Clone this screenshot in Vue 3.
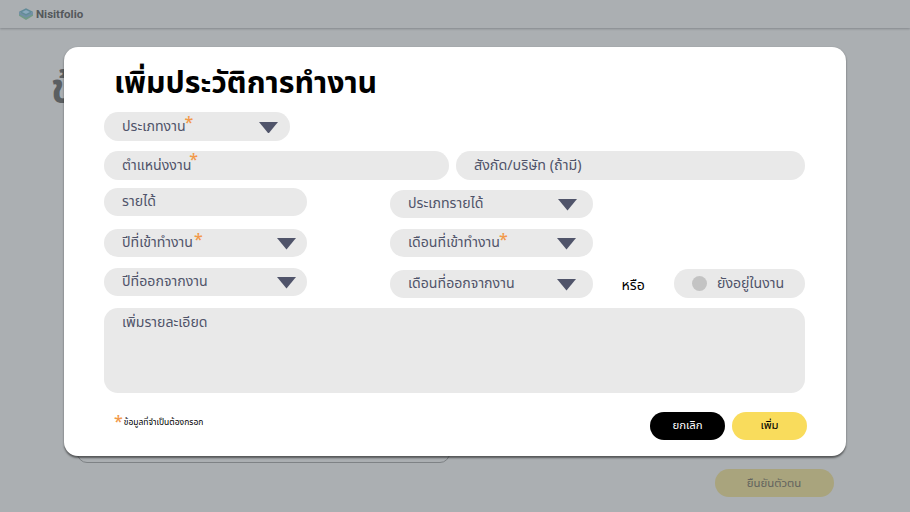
<script setup>
const left = [
  { label: 'รายได้', cls: 'l1' },
  { label: 'ปีที่เข้าทำงาน', required: true, arrow: true, cls: 'l2' },
  { label: 'ปีที่ออกจากงาน', arrow: true, cls: 'l3' },
]
const right = [
  { label: 'ประเภทรายได้', arrow: true, cls: 'r1' },
  { label: 'เดือนที่เข้าทำงาน', required: true, arrow: true, cls: 'r2' },
  { label: 'เดือนที่ออกจากงาน', arrow: true, cls: 'r3' },
]
</script>

<template>
  <div class="page">
    <header class="topbar">
      <svg class="logo" viewBox="0 0 14 12">
        <path d="M0 5.5 7 2.6 14 5.5v2.2L7 12 0 7.7z" fill="#729a86" />
        <path d="M0 3.8 7 7.4l7-3.6v2.4L7 9.8 0 6.2z" fill="#718fa6" />
        <path d="M7 .2 14 3.8 7 7.4 0 3.8z" fill="#628b98" />
        <path d="M3 4 7 2l4 2-4 2z" fill="#8aa9bd" />
      </svg>
      <span class="brand">Nisitfolio</span>
    </header>
    <h1 class="page-title">ข้</h1>
    <div class="page-card"></div>
    <button class="confirm">ยืนยันตัวตน</button>

    <section class="modal">
      <h2 class="title">เพิ่มประวัติการทำงาน</h2>

      <div class="field type">
        <span>ประเภทงาน</span><i class="star">*</i>
        <svg class="arrow" viewBox="0 0 18 11"><path d="M0 0h18L9 11z" /></svg>
      </div>

      <div class="wide-row">
        <div class="field position"><span>ตำแหน่งงาน</span><i class="star">*</i></div>
        <div class="field company"><span>สังกัด/บริษัท (ถ้ามี)</span></div>
      </div>

      <div class="columns">
        <div class="column">
          <div v-for="f in left" :key="f.cls" class="field" :class="f.cls">
            <span>{{ f.label }}</span><i v-if="f.required" class="star">*</i>
            <svg v-if="f.arrow" class="arrow" viewBox="0 0 18 11"><path d="M0 0h18L9 11z" /></svg>
          </div>
        </div>
        <div class="column second">
          <div v-for="f in right" :key="f.cls" class="field" :class="f.cls">
            <span>{{ f.label }}</span><i v-if="f.required" class="star">*</i>
            <svg v-if="f.arrow" class="arrow" viewBox="0 0 18 11"><path d="M0 0h18L9 11z" /></svg>
          </div>
        </div>
        <span class="or">หรือ</span>
        <div class="field current"><b class="dot"></b><span>ยังอยู่ในงาน</span></div>
      </div>

      <div class="details">เพิ่มรายละเอียด</div>

      <footer class="footer">
        <p class="note"><i class="star">*</i><span>ข้อมูลที่จำเป็นต้องกรอก</span></p>
        <button class="btn cancel">ยกเลิก</button>
        <button class="btn add">เพิ่ม</button>
      </footer>
    </section>
  </div>
</template>

<style>
body { margin: 0; overflow: hidden; background: #abafb2; }
</style>

<style scoped>
* { box-sizing: border-box; }
.page {
  position: relative;
  width: 910px;
  height: 512px;
  overflow: hidden;
  background: #abafb2;
  font-family: "Noto Sans Thai", "Noto Sans", sans-serif;
  white-space: nowrap;
}
.topbar {
  display: flex;
  align-items: center;
  height: 28px;
  padding-left: 19px;
  background: #abafb2;
  box-shadow: 0 1px 2px rgba(60, 64, 68, .35);
}
.logo { width: 14px; height: 12px; margin-right: 3px; }
.brand { font: 700 11.5px/28px Roboto, sans-serif; color: #54585b; }
.page-title { margin: 36px 0 0 51px; height: 58px; font-size: 39px; line-height: 54px; font-weight: 700; color: #5b5f62; }
.page-card { width: 373px; height: 341px; margin-left: 77px; border: 1px solid #7e8285; border-radius: 10px; }
.confirm {
  display: block;
  width: 119px;
  height: 28px;
  margin: 6px 0 0 714.5px;
  padding: 1px 0 0;
  border: 0;
  border-radius: 14px;
  background: #a9a47d;
  color: #62635e;
  font: 400 11.4px/28px "Noto Sans Thai", "Noto Sans", sans-serif;
}
.modal {
  position: absolute;
  left: 63.5px;
  top: 47px;
  width: 782.5px;
  height: 409px;
  padding: 0 39px 0 40.5px;
  border-radius: 14px;
  background: #fff;
  box-shadow: 0 1.5px 2px rgba(0, 0, 0, .5);
}
.title { margin: 0; height: 65px; padding: 14px 0 0 10px; font-size: 30.3px; line-height: 46px; font-weight: 700; color: #000; }
.field {
  display: flex;
  align-items: center;
  height: 28.5px;
  padding-left: 18px;
  border-radius: 14.25px;
  background: #e9e9e9;
  color: #50546a;
  font-size: 14.15px;
  line-height: 28.5px;
}
.star { align-self: flex-start; margin-top: -4px; font: 600 16px/28px "Open Sans", sans-serif; color: #f2994a; }
.arrow { width: 19px; height: 11.6px; margin: 2.5px 11px 0 auto; fill: #50546a; }
.type { width: 186px; }
.type span, .wide-row span, .current span { padding-top: 1px; }
.company { width: 349px; font-size: 14.3px; }
.type .arrow { margin-right: 12px; }
.type .star { margin: -4px 0 0 -1px; }
.wide-row { display: flex; gap: 7px; margin-top: 10.5px; }
.position { width: 345px; }
.position .star { margin: -6px 0 0 -2px; }
.columns { display: flex; height: 128.5px; padding-top: 8px; }
.column { width: 203px; }
.second { margin-left: 83px; }
.l2 { margin-top: 12.5px; }
.l2 .star { margin-left: 1px; }
.l3 { margin-top: 10.5px; }
.r1 { margin-top: 2px; }
.r2 { margin-top: 10.5px; }
.r2 .star { margin-left: -1px; }
.r3 { margin-top: 12.5px; }
.r1 .arrow, .r2 .arrow, .r3 .arrow { margin-right: 17px; }
.r1 .arrow { margin-right: 16px; }
.or { margin: 83px 0 0 28.5px; width: 52px; height: 28px; font-size: 14.15px; line-height: 29px; color: #000; }
.current { width: 131.5px; margin-top: 81.5px; padding-left: 18.5px; }
.dot { width: 15px; height: 15px; border-radius: 50%; margin: 0 10px 0 0; background: #c3c3c3; }
.details { width: 701px; height: 85px; padding-left: 18px; border-radius: 14px; background: #e9e9e9; color: #50546a; font-size: 14.15px; line-height: 30px; }
.footer { display: flex; margin-top: 18.5px; }
.note { display: flex; width: 546.5px; height: 20px; margin: 0; padding: 1px 0 0 10px; font-size: 8.5px; line-height: 20px; color: #000; }
.note .star { margin-top: -6px; margin-right: 1px; }
.btn { width: 75px; height: 28.5px; margin: 0 7px 0 0; padding: 0; border: 0; border-radius: 14.25px; font: 400 11.4px/28px "Noto Sans Thai", "Noto Sans", sans-serif; }
.cancel { background: #000; color: #fff; }
.add { margin: 0; background: #f9dc5c; color: #000; }
</style>
